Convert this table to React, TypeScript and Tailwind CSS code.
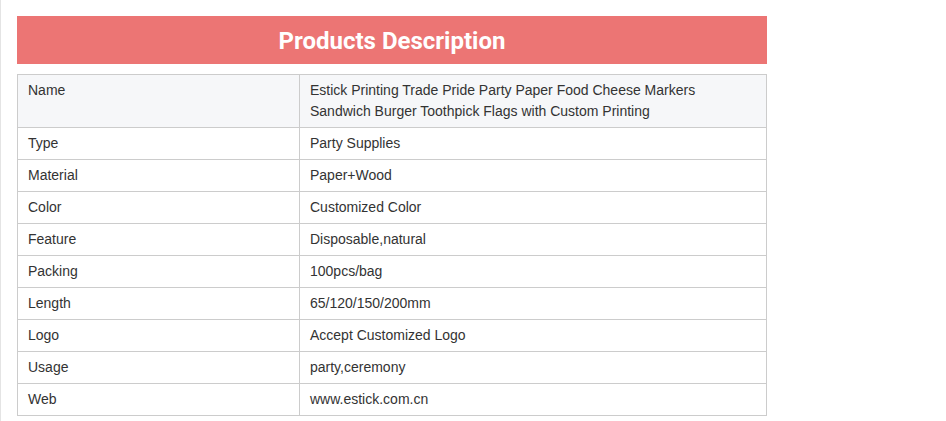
import React from "react";

const rows: [string, string[]][] = [
  ["Name", ["Estick Printing Trade Pride Party Paper Food Cheese Markers", "Sandwich Burger Toothpick Flags with Custom Printing"]],
  ["Type", ["Party Supplies"]],
  ["Material", ["Paper+Wood"]],
  ["Color", ["Customized Color"]],
  ["Feature", ["Disposable,natural"]],
  ["Packing", ["100pcs/bag"]],
  ["Length", ["65/120/150/200mm"]],
  ["Logo", ["Accept Customized Logo"]],
  ["Usage", ["party,ceremony"]],
  ["Web", ["www.estick.com.cn"]],
];

export default function App() {
  return (
    <div className="min-h-screen bg-white border-l border-[#e4e4e4] pl-[16px] pt-[16px]">
      <div className="w-[750px]">
        <div className="h-[48px] bg-[#ec7574] flex items-center justify-center pt-[2px]">
          <span className="text-white text-[24px] font-bold" style={{ fontFamily: "Roboto, 'Liberation Sans', sans-serif" }}>
            Products Description
          </span>
        </div>
        <table
          className="mt-[10px] w-[750px] border-collapse text-[14px] leading-[21px] text-[#333333] table-fixed"
          style={{ fontFamily: "'Liberation Sans', Arial, sans-serif" }}
        >
          <colgroup>
            <col className="w-[282px]" />
            <col />
          </colgroup>
          <tbody>
            {rows.map(([k, v], i) => (
              <tr key={k} className={i === 0 ? "bg-[#f6f7f9]" : "bg-white"}>
                <td className="border border-[#cccccc] align-top px-[10px] py-[5px]">{k}</td>
                <td className="border border-[#cccccc] align-top px-[10px] py-[5px]">
                  {v.map((line) => (
                    <div key={line}>{line}</div>
                  ))}
                </td>
              </tr>
            ))}
          </tbody>
        </table>
      </div>
    </div>
  );
}
